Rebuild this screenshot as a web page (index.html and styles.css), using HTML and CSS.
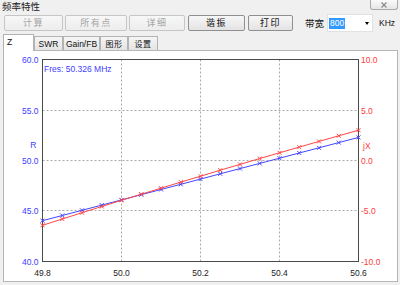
FILE: index.html
```html
<!DOCTYPE html>
<html lang="zh">
<head>
    <meta charset="UTF-8">
    <title>频率特性</title>
    <link rel="stylesheet" href="styles.css">
</head>
<body>
    <div class="window">
        <div class="titlebar">
            <span class="title">频率特性</span>
            <div class="close-btn">
                <svg width="8" height="6" viewBox="0 0 8 6"><path d="M1.5 0.5L6.5 5.5M1.5 5.5L6.5 0.5" stroke="#8a8a8a" stroke-width="1.2" fill="none"/></svg>
            </div>
        </div>

        <div class="toolbar">
            <button class="btn disabled btn-calc">计算</button>
            <button class="btn disabled btn-all">所有点</button>
            <button class="btn disabled btn-detail">详细</button>
            <button class="btn btn-res">谐振</button>
            <button class="btn btn-print">打印</button>
            <span class="bw-label">带宽</span>
            <div class="combo">
                <span class="combo-sel">800</span>
                <span class="combo-arrow"></span>
            </div>
            <span class="unit">KHz</span>
        </div>

        <div class="tabs">
            <div class="tab active tab-z">Z</div>
            <div class="tab tab-swr">SWR</div>
            <div class="tab tab-gain">Gain/FB</div>
            <div class="tab tab-cjk tab-shape">图形</div>
            <div class="tab tab-cjk tab-set">设置</div>
        </div>

        <div class="panel">
            <svg class="chart" width="393" height="230" viewBox="4 51 393 230">
                <defs>
                    <marker id="mk-blue" markerWidth="6" markerHeight="6" refX="3" refY="3" markerUnits="userSpaceOnUse">
                        <path d="M1 1L5 5M1 5L5 1" stroke="#4646ff" stroke-width="1" fill="none"/>
                    </marker>
                    <marker id="mk-red" markerWidth="6" markerHeight="6" refX="3" refY="3" markerUnits="userSpaceOnUse">
                        <path d="M1 1L5 5M1 5L5 1" stroke="#ff4646" stroke-width="1" fill="none"/>
                    </marker>
                </defs>

                <!-- grid -->
                <g class="grid">
                    <line x1="42.5" y1="110.5" x2="358.5" y2="110.5"/>
                    <line x1="42.5" y1="160.5" x2="358.5" y2="160.5"/>
                    <line x1="42.5" y1="210.5" x2="358.5" y2="210.5"/>
                    <line x1="121.5" y1="59.5" x2="121.5" y2="261.5"/>
                    <line x1="200.5" y1="59.5" x2="200.5" y2="261.5"/>
                    <line x1="279.5" y1="59.5" x2="279.5" y2="261.5"/>
                </g>
                <rect class="frame" x="42.5" y="59.5" width="316" height="202"/>

                <!-- curves -->
                <polyline class="curve-r" marker-start="url(#mk-blue)" marker-mid="url(#mk-blue)" marker-end="url(#mk-blue)"
                    points="42.5,220.7 62.25,215.5 82,210.3 101.75,205.1 121.5,199.9 141.25,194.7 161,189.5 180.75,184.3 200.5,179.1 220.25,173.8 240,168.6 259.75,163.4 279.5,158.2 299.25,153 319,147.8 338.75,142.6 358.5,137.4"/>
                <polyline class="curve-x" marker-start="url(#mk-red)" marker-mid="url(#mk-red)" marker-end="url(#mk-red)"
                    points="42.5,225.3 62.25,219 82,212.7 101.75,206.5 121.5,200.3 141.25,194.2 161,188.2 180.75,182.1 200.5,176.2 220.25,170.2 240,164.4 259.75,158.5 279.5,152.8 299.25,147.1 319,141.4 338.75,135.8 358.5,130.2"/>

                <text class="lbl lbl-blue" x="44" y="71.5">Fres: 50.326 MHz</text>

                <!-- left axis -->
                <g class="lbl lbl-blue axis-left">
                    <text x="38.5" y="62.5">60.0</text>
                    <text x="38.5" y="113.5">55.0</text>
                    <text x="38.5" y="163.5">50.0</text>
                    <text x="38.5" y="213.5">45.0</text>
                    <text x="38.5" y="264.5">40.0</text>
                    <text x="36.5" y="147.5">R</text>
                </g>

                <!-- right axis -->
                <g class="lbl lbl-red">
                    <text x="361" y="62.5">10.0</text>
                    <text x="361" y="113.5">5.0</text>
                    <text x="361" y="163.5">0.0</text>
                    <text x="361" y="213.5">-5.0</text>
                    <text x="361" y="264.5">-10.0</text>
                    <text x="363" y="149">jX</text>
                </g>

                <!-- frequency axis -->
                <g class="lbl axis-bottom">
                    <text x="42.5" y="275.5">49.8</text>
                    <text x="121.5" y="275.5">50.0</text>
                    <text x="200.5" y="275.5">50.2</text>
                    <text x="279.5" y="275.5">50.4</text>
                    <text x="358.5" y="275.5">50.6</text>
                </g>
            </svg>
        </div>
    </div>
</body>
</html>
```

FILE: styles.css
```css
* {
    box-sizing: border-box;
}

body {
    margin: 0;
    padding: 0;
    width: 400px;
    height: 285px;
    overflow: hidden;
    background-color: #f0f0f0;
    font-family: "Liberation Sans", "Noto Sans CJK SC", sans-serif;
}

/* Barra de titulo */
.titlebar {
    height: 14px;
    display: flex;
    justify-content: space-between;
    align-items: flex-start;
}

.title {
    font-family: "Noto Sans CJK SC", sans-serif;
    font-size: 9.5px;
    line-height: 12px;
    margin-left: 2px;
    color: #222;
}

.close-btn {
    width: 28px;
    height: 10px;
    margin-right: 2px;
    border: 1px solid #aaaaaa;
    border-top: none;
    border-radius: 0 0 3px 3px;
    background: linear-gradient(#fafafa, #e6e6e6);
    display: flex;
    align-items: center;
    justify-content: center;
}

/* Botoes */
.toolbar {
    height: 16px;
    margin-top: 1px;
    padding-left: 4px;
    display: flex;
    align-items: center;
}

.btn {
    height: 16px;
    padding: 0;
    margin: 0 2px 0 0;
    border: 1px solid #8f8f8f;
    border-radius: 2px;
    background: linear-gradient(#f7f7f7, #e3e3e3);
    font-family: "Noto Sans CJK SC", sans-serif;
    font-size: 9px;
    letter-spacing: 1.5px;
    line-height: 14px;
    color: #111;
    text-align: center;
}

.btn.disabled {
    color: #a6a6a6;
    border-color: #c6c6c6;
    background: linear-gradient(#f7f7f7, #ededed);
}

.btn-calc { width: 59px; }
.btn-all { width: 62px; }
.btn-detail { width: 56px; margin-right: 3px; }
.btn-res { width: 57px; margin-right: 3px; }
.btn-print { width: 45px; }

.bw-label {
    font-family: "Noto Sans CJK SC", sans-serif;
    font-size: 9.5px;
    margin-left: 10px;
    color: #111;
}

.combo {
    width: 46px;
    height: 18px;
    margin-left: 3px;
    padding-left: 1px;
    background-color: #fff;
    border: 1px solid #e2e2e2;
    display: flex;
    align-items: center;
}

.combo-sel {
    width: 16px;
    height: 11px;
    line-height: 11px;
    font-size: 8.5px;
    padding-left: 1px;
    background-color: #3399ff;
    color: #fff;
}

.combo-arrow {
    margin-left: auto;
    margin-right: 3px;
    width: 0;
    height: 0;
    border-left: 2.5px solid transparent;
    border-right: 2.5px solid transparent;
    border-top: 3px solid #000;
}

.unit {
    margin-left: 6px;
    font-size: 8.5px;
    color: #111;
}

/* Abas */
.tabs {
    height: 17px;
    margin-top: 3px;
    padding-left: 3px;
    display: flex;
    align-items: flex-end;
    position: relative;
    z-index: 1;
}

.tab {
    height: 14px;
    margin-bottom: 1px;
    border: 1px solid #b3b3b3;
    border-bottom: none;
    background: linear-gradient(#f5f5f5, #e4e4e4);
    font-size: 8.5px;
    line-height: 14px;
    text-align: center;
    color: #111;
}

.tab-cjk {
    font-family: "Noto Sans CJK SC", sans-serif;
    font-size: 8px;
    letter-spacing: 0.5px;
}

.tab.active {
    height: 17px;
    margin-bottom: 0;
    padding-left: 3px;
    background: #fff;
    text-align: left;
    line-height: 15px;
}

.tab-z { width: 31px; }
.tab-swr { width: 29px; }
.tab-gain { width: 37px; }
.tab-shape { width: 28px; }
.tab-set { width: 30px; }

/* Painel do grafico */
.panel {
    width: 395px;
    height: 232px;
    margin-top: -1px;
    margin-left: 3px;
    border: 1px solid #b6b6b6;
    background-color: #fff;
}

.chart {
    display: block;
}

.grid line {
    stroke: #a9a9a9;
    stroke-width: 1;
    stroke-dasharray: 2 2;
}

.frame {
    fill: none;
    stroke: #4a4a4a;
    stroke-width: 1;
}

.curve-r {
    fill: none;
    stroke: #4646ff;
    stroke-width: 1;
}

.curve-x {
    fill: none;
    stroke: #ff4646;
    stroke-width: 1;
}

.lbl {
    font-family: "Liberation Sans", sans-serif;
    font-size: 8.5px;
    fill: #222;
}

.lbl-blue { fill: #3d3dff; }
.lbl-red { fill: #ff3c3c; }

.axis-left text {
    text-anchor: end;
}

.axis-bottom text {
    text-anchor: middle;
}
```
